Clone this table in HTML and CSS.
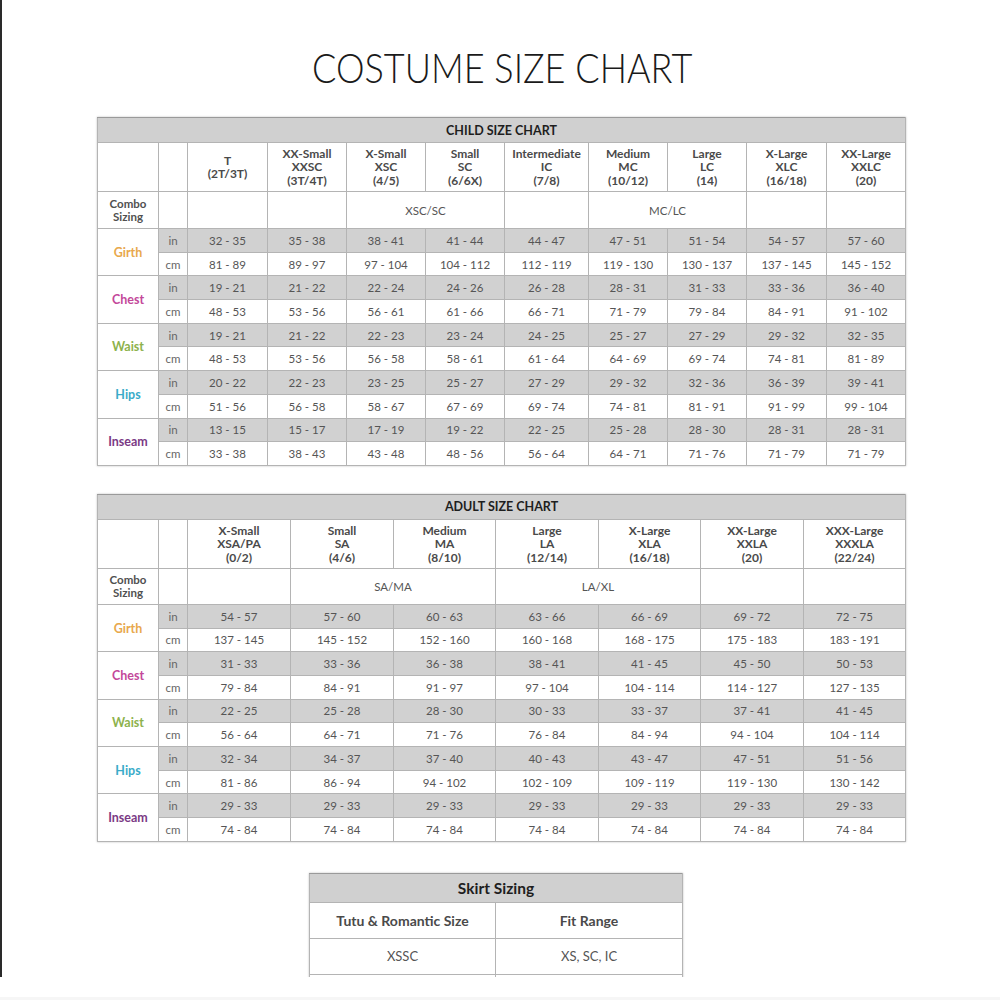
FILE: index.html
```html
<!DOCTYPE html>
<html>
<head>
<meta charset="utf-8">
<link rel="stylesheet" href="styles.css">
</head>
<body>
<div class="page">
  <h1 class="title"><span class="title-text">COSTUME SIZE CHART</span></h1>

  <table class="chart child">
    <colgroup>
      <col style="width:61px"><col style="width:29px">
      <col style="width:80px"><col style="width:79px"><col style="width:79px"><col style="width:79px">
      <col style="width:84px"><col style="width:79px"><col style="width:79px"><col style="width:80px"><col style="width:79px">
    </colgroup>
    <tr class="band"><th colspan="11">CHILD SIZE CHART</th></tr>
    <tr class="head">
      <th></th><th></th>
      <th>T<br>(2T/3T)</th>
      <th>XX-Small<br>XXSC<br>(3T/4T)</th>
      <th>X-Small<br>XSC<br>(4/5)</th>
      <th>Small<br>SC<br>(6/6X)</th>
      <th>Intermediate<br>IC<br>(7/8)</th>
      <th>Medium<br>MC<br>(10/12)</th>
      <th>Large<br>LC<br>(14)</th>
      <th>X-Large<br>XLC<br>(16/18)</th>
      <th>XX-Large<br>XXLC<br>(20)</th>
    </tr>
    <tr class="combo">
      <th class="combo-label">Combo<br>Sizing</th><td></td>
      <td></td><td></td><td colspan="2">XSC/SC</td><td></td><td colspan="2">MC/LC</td><td></td><td></td>
    </tr>
    <tr class="in"><th rowspan="2" class="lbl girth">Girth</th><td class="u">in</td><td>32 - 35</td><td>35 - 38</td><td>38 - 41</td><td>41 - 44</td><td>44 - 47</td><td>47 - 51</td><td>51 - 54</td><td>54 - 57</td><td>57 - 60</td></tr>
    <tr class="cm"><td class="u">cm</td><td>81 - 89</td><td>89 - 97</td><td>97 - 104</td><td>104 - 112</td><td>112 - 119</td><td>119 - 130</td><td>130 - 137</td><td>137 - 145</td><td>145 - 152</td></tr>
    <tr class="in"><th rowspan="2" class="lbl chest">Chest</th><td class="u">in</td><td>19 - 21</td><td>21 - 22</td><td>22 - 24</td><td>24 - 26</td><td>26 - 28</td><td>28 - 31</td><td>31 - 33</td><td>33 - 36</td><td>36 - 40</td></tr>
    <tr class="cm"><td class="u">cm</td><td>48 - 53</td><td>53 - 56</td><td>56 - 61</td><td>61 - 66</td><td>66 - 71</td><td>71 - 79</td><td>79 - 84</td><td>84 - 91</td><td>91 - 102</td></tr>
    <tr class="in"><th rowspan="2" class="lbl waist">Waist</th><td class="u">in</td><td>19 - 21</td><td>21 - 22</td><td>22 - 23</td><td>23 - 24</td><td>24 - 25</td><td>25 - 27</td><td>27 - 29</td><td>29 - 32</td><td>32 - 35</td></tr>
    <tr class="cm"><td class="u">cm</td><td>48 - 53</td><td>53 - 56</td><td>56 - 58</td><td>58 - 61</td><td>61 - 64</td><td>64 - 69</td><td>69 - 74</td><td>74 - 81</td><td>81 - 89</td></tr>
    <tr class="in"><th rowspan="2" class="lbl hips">Hips</th><td class="u">in</td><td>20 - 22</td><td>22 - 23</td><td>23 - 25</td><td>25 - 27</td><td>27 - 29</td><td>29 - 32</td><td>32 - 36</td><td>36 - 39</td><td>39 - 41</td></tr>
    <tr class="cm"><td class="u">cm</td><td>51 - 56</td><td>56 - 58</td><td>58 - 67</td><td>67 - 69</td><td>69 - 74</td><td>74 - 81</td><td>81 - 91</td><td>91 - 99</td><td>99 - 104</td></tr>
    <tr class="in"><th rowspan="2" class="lbl inseam">Inseam</th><td class="u">in</td><td>13 - 15</td><td>15 - 17</td><td>17 - 19</td><td>19 - 22</td><td>22 - 25</td><td>25 - 28</td><td>28 - 30</td><td>28 - 31</td><td>28 - 31</td></tr>
    <tr class="cm"><td class="u">cm</td><td>33 - 38</td><td>38 - 43</td><td>43 - 48</td><td>48 - 56</td><td>56 - 64</td><td>64 - 71</td><td>71 - 76</td><td>71 - 79</td><td>71 - 79</td></tr>
  </table>

  <table class="chart adult">
    <colgroup>
      <col style="width:61px"><col style="width:29px">
      <col style="width:103px"><col style="width:103px"><col style="width:102px"><col style="width:103px">
      <col style="width:102px"><col style="width:103px"><col style="width:102px">
    </colgroup>
    <tr class="band"><th colspan="9">ADULT SIZE CHART</th></tr>
    <tr class="head">
      <th></th><th></th>
      <th>X-Small<br>XSA/PA<br>(0/2)</th>
      <th>Small<br>SA<br>(4/6)</th>
      <th>Medium<br>MA<br>(8/10)</th>
      <th>Large<br>LA<br>(12/14)</th>
      <th>X-Large<br>XLA<br>(16/18)</th>
      <th>XX-Large<br>XXLA<br>(20)</th>
      <th>XXX-Large<br>XXXLA<br>(22/24)</th>
    </tr>
    <tr class="combo">
      <th class="combo-label">Combo<br>Sizing</th><td></td>
      <td></td><td colspan="2">SA/MA</td><td colspan="2">LA/XL</td><td></td><td></td>
    </tr>
    <tr class="in"><th rowspan="2" class="lbl girth">Girth</th><td class="u">in</td><td>54 - 57</td><td>57 - 60</td><td>60 - 63</td><td>63 - 66</td><td>66 - 69</td><td>69 - 72</td><td>72 - 75</td></tr>
    <tr class="cm"><td class="u">cm</td><td>137 - 145</td><td>145 - 152</td><td>152 - 160</td><td>160 - 168</td><td>168 - 175</td><td>175 - 183</td><td>183 - 191</td></tr>
    <tr class="in"><th rowspan="2" class="lbl chest">Chest</th><td class="u">in</td><td>31 - 33</td><td>33 - 36</td><td>36 - 38</td><td>38 - 41</td><td>41 - 45</td><td>45 - 50</td><td>50 - 53</td></tr>
    <tr class="cm"><td class="u">cm</td><td>79 - 84</td><td>84 - 91</td><td>91 - 97</td><td>97 - 104</td><td>104 - 114</td><td>114 - 127</td><td>127 - 135</td></tr>
    <tr class="in"><th rowspan="2" class="lbl waist">Waist</th><td class="u">in</td><td>22 - 25</td><td>25 - 28</td><td>28 - 30</td><td>30 - 33</td><td>33 - 37</td><td>37 - 41</td><td>41 - 45</td></tr>
    <tr class="cm"><td class="u">cm</td><td>56 - 64</td><td>64 - 71</td><td>71 - 76</td><td>76 - 84</td><td>84 - 94</td><td>94 - 104</td><td>104 - 114</td></tr>
    <tr class="in"><th rowspan="2" class="lbl hips">Hips</th><td class="u">in</td><td>32 - 34</td><td>34 - 37</td><td>37 - 40</td><td>40 - 43</td><td>43 - 47</td><td>47 - 51</td><td>51 - 56</td></tr>
    <tr class="cm"><td class="u">cm</td><td>81 - 86</td><td>86 - 94</td><td>94 - 102</td><td>102 - 109</td><td>109 - 119</td><td>119 - 130</td><td>130 - 142</td></tr>
    <tr class="in"><th rowspan="2" class="lbl inseam">Inseam</th><td class="u">in</td><td>29 - 33</td><td>29 - 33</td><td>29 - 33</td><td>29 - 33</td><td>29 - 33</td><td>29 - 33</td><td>29 - 33</td></tr>
    <tr class="cm"><td class="u">cm</td><td>74 - 84</td><td>74 - 84</td><td>74 - 84</td><td>74 - 84</td><td>74 - 84</td><td>74 - 84</td><td>74 - 84</td></tr>
  </table>

  <table class="chart skirt">
    <colgroup><col style="width:186px"><col style="width:187px"></colgroup>
    <tr class="band"><th colspan="2">Skirt Sizing</th></tr>
    <tr class="srow"><th>Tutu &amp; Romantic Size</th><th>Fit Range</th></tr>
    <tr class="srow"><td>XSSC</td><td>XS, SC, IC</td></tr>
    <tr class="srow"><td></td><td></td></tr>
  </table>
</div>
<div class="footer-band"></div>
</body>
</html>
```

FILE: styles.css
```css
html, body {
  margin: 0;
  padding: 0;
  background: #ffffff;
}

.page {
  height: 977px;
  overflow: hidden;
  border-left: 2px solid #2a2a2a;
  box-sizing: border-box;
  font-family: Lato, "Liberation Sans", sans-serif;
  color: #555;
}

.footer-band {
  height: 20px;
  background: #ffffff;
  border-bottom: 3px solid #f6f6f6;
}

.title {
  margin: 0;
  height: 117px;
  box-sizing: border-box;
  padding-top: 47px;
  text-align: center;
  font-family: Lato, "Liberation Sans", sans-serif;
  font-weight: 300;
  font-size: 41px;
  line-height: 41px;
  color: #1a1a1a;
}

.title-text {
  display: inline-block;
  transform: scaleX(0.88);
  margin-left: 2px;
}

.chart {
  border-collapse: collapse;
  table-layout: fixed;
  margin-left: 95px;
  font-size: 11.5px;
  box-shadow: 0 0 2px rgba(0,0,0,0.25);
}

.chart td, .chart th {
  border: 1px solid #b4b4b4;
  padding: 0;
  text-align: center;
  vertical-align: middle;
  overflow: hidden;
  white-space: nowrap;
}

.child { width: 808px; }
.adult { width: 808px; margin-top: 28px; }
.skirt { width: 373px; margin-left: 307px; margin-top: 31px; }

.band th {
  background: #d0d0d0;
  color: #1e1e1e;
  font-weight: 700;
  font-size: 12.5px;
  height: 24px;
  border-top: 1px solid #9a9a9a;
}

.head th {
  height: 48px;
  font-weight: 700;
  font-size: 12px;
  line-height: 13.5px;
  color: #4a4a4a;
}

.combo td, .combo th {
  height: 36px;
}

.adult .combo td, .adult .combo th {
  height: 35px;
}

.combo td {
  color: #555;
  font-weight: 400;
}

.combo-label {
  font-weight: 700;
  line-height: 13px;
  color: #505050;
}

.in td, .cm td {
  height: 22.7px;
}

.in td {
  background: #d1d1d1;
}

.cm td {
  background: #ffffff;
}

.u {
  color: #666;
}

.lbl {
  background: #fff;
  font-weight: 700;
  font-size: 12.5px;
}

.girth { color: #e8a84c; }
.chest { color: #c3489a; }
.waist { color: #8db24c; }
.hips { color: #3aabc9; }
.inseam { color: #7b3a85; }

.skirt .band th {
  height: 28px;
  font-size: 15.5px;
}

.srow th, .srow td {
  height: 35px;
  font-size: 13px;
}

.srow th {
  font-weight: 700;
  font-size: 14px;
  color: #4a4a4a;
}
```
